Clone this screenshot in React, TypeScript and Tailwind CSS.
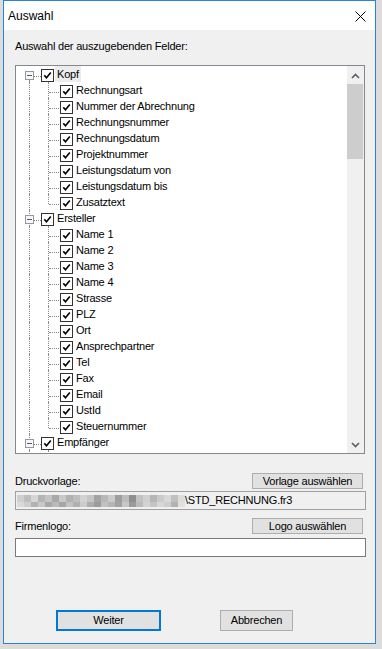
import React from 'react';

type Node = { label: string; children: string[] };

const tree: Node[] = [
  {
    label: 'Kopf',
    children: [
      'Rechnungsart',
      'Nummer der Abrechnung',
      'Rechnungsnummer',
      'Rechnungsdatum',
      'Projektnummer',
      'Leistungsdatum von',
      'Leistungsdatum bis',
      'Zusatztext',
    ],
  },
  {
    label: 'Ersteller',
    children: [
      'Name 1',
      'Name 2',
      'Name 3',
      'Name 4',
      'Strasse',
      'PLZ',
      'Ort',
      'Ansprechpartner',
      'Tel',
      'Fax',
      'Email',
      'UstId',
      'Steuernummer',
    ],
  },
  { label: 'Empfänger', children: [] },
];

// blurred part of the file path
const mosaicTop = [
  'bg-[#cfcfcf]', 'bg-[#bdbdbd]', 'bg-[#d6d6d6]', 'bg-[#b4b4b4]', 'bg-[#c4c4c4]', 'bg-[#a9a9a9]',
  'bg-[#c9c9c9]', 'bg-[#b1b1b1]', 'bg-[#bebebe]', 'bg-[#d2d2d2]', 'bg-[#c6c6c6]', 'bg-[#a4a4a4]',
  'bg-[#b8b8b8]', 'bg-[#cbcbcb]', 'bg-[#9e9e9e]', 'bg-[#bcbcbc]', 'bg-[#8f8f8f]', 'bg-[#c2c2c2]',
  'bg-[#d0d0d0]', 'bg-[#b6b6b6]', 'bg-[#cacaca]', 'bg-[#d8d8d8]', 'bg-[#c0c0c0]', 'bg-[#dcdcdc]',
];
const mosaicBottom = [
  'bg-[#dadada]', 'bg-[#cdcdcd]', 'bg-[#b2b2b2]', 'bg-[#c8c8c8]', 'bg-[#a8a8a8]', 'bg-[#bababa]',
  'bg-[#a6a6a6]', 'bg-[#c3c3c3]', 'bg-[#b0b0b0]', 'bg-[#cccccc]', 'bg-[#aeaeae]', 'bg-[#9c9c9c]',
  'bg-[#c1c1c1]', 'bg-[#b5b5b5]', 'bg-[#a2a2a2]', 'bg-[#c7c7c7]', 'bg-[#9a9a9a]', 'bg-[#bbbbbb]',
  'bg-[#d3d3d3]', 'bg-[#c5c5c5]', 'bg-[#d7d7d7]', 'bg-[#cecece]', 'bg-[#b3b3b3]', 'bg-[#e0e0e0]',
];

const Check = () => (
  <span className="flex h-[13px] w-[13px] items-center justify-center border border-[#333333] bg-white">
    <svg width="9" height="9" viewBox="0 0 9 9">
      <path d="M1.3 4.4 L3.5 6.8 L7.8 1.6" fill="none" stroke="#000" strokeWidth="1.6" />
    </svg>
  </span>
);

const Expander = () => (
  <span className="flex h-[9px] w-[9px] items-center justify-center border border-[#989898] bg-[#f7f7f7]">
    <span className="h-px w-[5px] bg-[#4a5d8c]" />
  </span>
);

const VLine = ({ left, top = 0, bottom }: { left: string; top?: number; bottom?: boolean }) => (
  <span
    className={`absolute w-0 border-l border-dotted border-[#8c8c8c] ${left} ${bottom ? 'bottom-0' : 'h-[10px]'}`}
    style={{ top }}
  />
);

const ParentRow = ({ label, first, selected }: { label: string; first: boolean; selected?: boolean }) => (
  <div className="relative h-[16px]">
    <VLine left="left-[13px]" top={first ? 14 : 0} bottom />
    <span className="absolute left-[9px] top-[5px]">
      <Expander />
    </span>
    <span className="absolute left-[18px] top-[10px] w-[7px] border-t border-dotted border-[#8c8c8c]" />
    <span className="absolute left-[25px] top-[3px]">
      <Check />
    </span>
    <span className={`absolute left-[39px] top-0 h-[16px] px-[2px] leading-[16px] ${selected ? 'bg-[#ececec]' : ''}`}>
      {label}
    </span>
  </div>
);

const ChildRow = ({ label, last }: { label: string; last: boolean }) => (
  <div className="relative h-[16px]">
    <VLine left="left-[13px]" bottom />
    {last ? <VLine left="left-[32px]" /> : <VLine left="left-[32px]" bottom />}
    <span className="absolute left-[33px] top-[10px] w-[10px] border-t border-dotted border-[#8c8c8c]" />
    <span className="absolute left-[44px] top-[3px]">
      <Check />
    </span>
    <span className="absolute left-[60px] top-0 leading-[16px]">{label}</span>
  </div>
);

const Chevron = ({ down }: { down?: boolean }) => (
  <svg width="9" height="6" viewBox="0 0 9 6">
    <path
      d={down ? 'M1 1 L4.5 4.5 L8 1' : 'M1 5 L4.5 1.5 L8 5'}
      fill="none"
      stroke="#606060"
      strokeWidth="1.7"
    />
  </svg>
);

const WinButton = ({ children, className }: { children: React.ReactNode; className: string }) => (
  <button className={`flex items-center justify-center bg-[#e1e1e1] leading-none text-black ${className}`}>
    {children}
  </button>
);

export default function App() {
  return (
    <div className="h-[649px] w-[382px] overflow-hidden bg-[#dcdcdc] pl-[3px] font-['Liberation_Sans',Arial,sans-serif] text-[11px] tracking-[-0.2px] text-black">
      <div className="flex h-[644px] w-[373px] flex-col border border-[#2a84d6] bg-[#f0f0f0]">
        {/* title bar */}
        <div className="flex h-[29px] items-center justify-between bg-white pl-[4px] pr-[9px]">
          <span className="text-[12px] tracking-normal">Auswahl</span>
          <svg width="11" height="11" viewBox="0 0 11 11" className="mt-[2px]">
            <path d="M0.5 0.5 L10.5 10.5 M10.5 0.5 L0.5 10.5" stroke="#000" strokeWidth="1" />
          </svg>
        </div>

        {/* body */}
        <div className="flex flex-1 flex-col pl-[11px] pr-[9px] pt-[10px]">
          <div className="h-[13px] leading-[13px]">Auswahl der auszugebenden Felder:</div>

          <div className="mt-[12px] flex h-[389px] w-[350px] border border-[#828790] bg-white">
            <div className="flex-1 overflow-hidden">
              {tree.map((node, i) => (
                <React.Fragment key={node.label}>
                  <ParentRow label={node.label} first={i === 0} selected={i === 0} />
                  {node.children.map((c, j) => (
                    <ChildRow key={c + j} label={c} last={j === node.children.length - 1} />
                  ))}
                </React.Fragment>
              ))}
              {/* the tree goes on below the visible area */}
              <div className="relative h-[16px]">
                <VLine left="left-[13px]" bottom />
                <VLine left="left-[32px]" bottom />
              </div>
            </div>
            <div className="flex w-[17px] flex-col bg-[#f0f0f0]">
              <div className="flex h-[17px] items-center justify-center pt-[2px]">
                <Chevron />
              </div>
              <div className="mt-px h-[75px] w-[16px] bg-[#cdcdcd]" />
              <div className="flex-1" />
              <div className="flex h-[17px] items-center justify-center">
                <Chevron down />
              </div>
            </div>
          </div>

          <div className="mt-[19px] flex h-[16px] items-center justify-between pr-[3px]">
            <span>Druckvorlage:</span>
            <WinButton className="h-[16px] w-[111px] border border-[#adadad]">Vorlage auswählen</WinButton>
          </div>
          <div className="mt-[2px] flex h-[19px] items-center border border-[#a0a0a0] bg-[#f0f0f0] pl-px">
            <div className="flex w-[168px] flex-col">
              <div className="flex h-[7px]">
                {mosaicTop.map((c, i) => (
                  <span key={i} className={`h-full w-[7px] ${c}`} />
                ))}
              </div>
              <div className="flex h-[5px]">
                {mosaicBottom.map((c, i) => (
                  <span key={i} className={`h-full w-[7px] ${c}`} />
                ))}
              </div>
            </div>
            <span className="leading-none">\STD_RECHNUNG.fr3</span>
          </div>

          <div className="mt-[8px] flex h-[16px] items-center justify-between pr-[3px]">
            <span>Firmenlogo:</span>
            <WinButton className="h-[16px] w-[111px] border border-[#adadad]">Logo auswählen</WinButton>
          </div>
          <div className="mt-[4px] h-[19px] border border-[#7a7a7a] bg-white" />

          <div className="mt-[53px] flex h-[21px]">
            <WinButton className="ml-[41px] h-[21px] w-[105px] border-2 border-[#0078d7]">Weiter</WinButton>
            <WinButton className="ml-[59px] h-[21px] w-[73px] border border-[#adadad]">Abbrechen</WinButton>
          </div>
        </div>
      </div>
    </div>
  );
}
